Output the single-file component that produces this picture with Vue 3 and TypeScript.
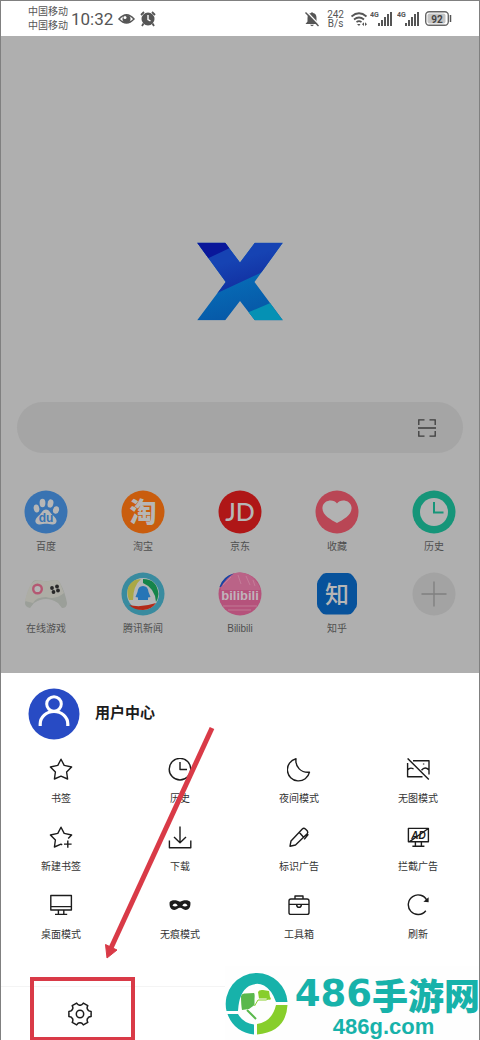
<script setup lang="ts">
interface Shortcut {
  id: string
  label: string
}

interface MenuEntry {
  label: string
  d: string
  solid?: string
  text?: string
}

const shortcuts: Shortcut[] = [
  { id: 'baidu', label: '百度' },
  { id: 'taobao', label: '淘宝' },
  { id: 'jd', label: '京东' },
  { id: 'fav', label: '收藏' },
  { id: 'history', label: '历史' },
  { id: 'games', label: '在线游戏' },
  { id: 'news', label: '腾讯新闻' },
  { id: 'bili', label: 'Bilibili' },
  { id: 'zhihu', label: '知乎' },
  { id: 'add', label: '' },
]

const menu: MenuEntry[] = [
  { label: '书签', d: 'M12 1.2L15.2 7.4L22.6 9L17.6 14L18.6 21L12 18.2L5.4 21L6.4 14L1.4 9L8.8 7.4Z' },
  { label: '历史', d: 'M12 .4A10.8 10.8 0 1 1 12 22A10.8 10.8 0 1 1 12 .4ZM12 4V11.5H19' },
  { label: '夜间模式', d: 'M9 .8C8 9 14 15 22.5 14.2A11.2 11.2 0 1 1 9 .8Z' },
  {
    label: '无图模式',
    d: 'M7 2.7H23V16.5M1.6 5V18.8H16.5M1.6 .4L22.8 21.4M1.6 12.2Q4 8.8 7.6 11M15.5 12.2Q19 8 23 12M17.6 5.4V6.6',
  },
  {
    label: '新建书签',
    d: 'M13.2 18.8L12 18.2L5.4 21L6.4 14L1.4 9L8.8 7.4L12 1.2L15.2 7.4L22.6 9L19.2 12.4M18.8 14.4V21.8M15 18.1H22.6',
  },
  { label: '下载', d: 'M1.4 14.5V21.8H22.8V14.5M12 .4V16.6M6 11L12 16.8L18 11' },
  {
    label: '标识广告',
    d: 'M3 20.2L4 15L15.3 3Q16.8 1.6 18.4 3L20.2 4.8Q21.4 6.3 20.2 7.8L8.5 19ZM12.2 6.3L16.6 11.2M21.3 8.2L17.2 13.4',
  },
  { label: '拦截广告', d: 'M2.4 2.4H22.4V15.8H2.4ZM9.4 16V20M15.4 16V20M6.4 20.2H18.4M3.6 15.6L22 2.8', text: 'AD' },
  { label: '桌面模式', d: 'M1.8 1.5H22.4V16H1.8ZM1.8 12.6H22.4M9.4 16V20.2M14.8 16V20.2M6 20.4H18.2' },
  {
    label: '无痕模式',
    d: '',
    solid:
      'M1.6 8.2C3.5 5.4 9 5.8 12 7.8C15 5.8 20.5 5.4 22.4 8.2C22.8 12 21.6 16 17.6 16C15 16 14 13.8 12 13.8C10 13.8 9 16 6.4 16C2.4 16 1.2 12 1.6 8.2ZM4.4 11.4Q7 7.6 9.8 11.4Q7 13.6 4.4 11.4ZM14.2 11.4Q17 7.6 19.6 11.4Q17 13.6 14.2 11.4Z',
  },
  {
    label: '工具箱',
    d: 'M4 5H20Q22 5 22 7V18.4Q22 20.4 20 20.4H4Q2 20.4 2 18.4V7Q2 5 4 5ZM8 5V2H16V5M2 10.4H22M9.6 10.6Q9.8 13.4 12 13.4Q14.2 13.4 14.4 10.6',
  },
  { label: '刷新', d: 'M21 6.6A9.8 9.8 0 1 0 19.8 16.8', solid: 'M22.6 3.2V8.2L17.4 7.8Z' },
]

function polar(deg: number, r: number): string {
  const a = (deg * Math.PI) / 180
  return `${(12 + r * Math.cos(a)).toFixed(2)} ${(12 + r * Math.sin(a)).toFixed(2)}`
}

const gearPath =
  [0, 60, 120, 180, 240, 300]
    .map((a, i) => `${i ? 'L' : 'M'}${polar(a - 13, 11.4)}L${polar(a + 13, 11.4)}Q${polar(a + 20, 8.4)} ${polar(a + 30, 9)}Q${polar(a + 40, 8.4)} ${polar(a + 47, 11.4)}`)
    .join('') + 'Z'

const bars = [3, 6, 9, 12, 15]
</script>

<template>
  <div class="phone">
    <header class="status">
      <div class="carriers"><span>中国移动</span><span>中国移动</span></div>
      <span class="time">10:32</span>
      <svg class="eye" viewBox="0 0 17 14" width="17" height="14">
        <path d="M1 7Q8.500-1.500 16 7Q8.500 15 1 7Z" fill="none" stroke="#555" stroke-width="1.500" />
        <circle cx="8.500" cy="7" r="4" fill="#555" /><circle cx="7" cy="5.500" r="1.500" fill="#fff" />
      </svg>
      <svg class="alarm" viewBox="0 0 16 16" width="16" height="16">
        <circle cx="8" cy="8" r="6.500" fill="#555" />
        <path d="M1 4L4 1M15 4L12 1M3.500 12.500L2 15M12.500 12.500L14 15" stroke="#555" stroke-width="1.800" />
        <path d="M8 4V8.500L10.500 10" fill="none" stroke="#fff" stroke-width="1.400" />
      </svg>
      <span class="spacer"></span>
      <svg viewBox="0 0 16 16" width="16" height="16">
        <path d="M1.500 13L3.500 10.500V7Q3.500 2.500 7 2L8 1L9 2Q12.500 2.500 12.500 7V10.500L14.500 13ZM6 13.800H10Q8 16.500 6 13.800Z" fill="#555" />
        <path d="M2.500 .5L15.500 14" stroke="#fff" stroke-width="1.400" /><path d="M1.500 1.500L14.500 15" stroke="#555" stroke-width="1.400" />
      </svg>
      <div class="speed"><span>242</span><span>B/s</span></div>
      <svg class="wifi" viewBox="0 0 18 16" width="18" height="16">
        <path d="M1.500 5.500Q9-1 16.500 5.500M4 8.500Q9 4.500 14 8.500M6.500 11.200Q9 9.200 11.500 11.200" fill="none" stroke="#555" stroke-width="1.700" />
        <path d="M7 13L9 15L10.500 13ZM12 13.200L14 11.200V15ZM17 13.200L15 11.200V15Z" fill="#555" />
      </svg>
      <svg v-for="n in 2" :key="n" class="signal" viewBox="0 0 25 16" width="25" height="16">
        <text x="0" y="6" class="net">4G</text>
        <rect v-for="(h, i) in bars" :key="h" :x="8 + i * 3" :y="15 - h + (i === 4 ? 1 : 0)" width="2" :height="i === 4 ? h - 1 : h" fill="#555" />
      </svg>
      <svg class="battery" viewBox="0 0 27 15" width="27" height="15">
        <rect x=".7" y=".7" width="22.600" height="13.600" rx="3.500" fill="none" stroke="#666" stroke-width="1.400" />
        <rect x="2.500" y="2.500" width="18" height="10" rx="2" fill="#c5c5c5" />
        <path d="M25.500 4V11" stroke="#555" stroke-width="1.500" />
        <text x="12" y="11.500" class="pct">92</text>
      </svg>
    </header>

    <main class="home">
      <svg class="logo" viewBox="0 0 86 78" width="86" height="79" role="img" aria-label="X">
        <defs>
          <clipPath id="xshape"><path d="M0 0H28L43 20L58 0H86L57.500 39.500L86 78H58L43 58.500L28 78H0L28.700 39.500Z" /></clipPath>
          <linearGradient id="xa" x1="0" y1="0" x2=".4" y2="1"><stop offset=".4" stop-color="#1643b3" /><stop offset="1" stop-color="#10299b" /></linearGradient>
          <linearGradient id="xb" x1="0" y1="0" x2=".3" y2="1"><stop offset=".5" stop-color="#066db7" /><stop offset="1" stop-color="#0759a8" /></linearGradient>
        </defs>
        <g clip-path="url(#xshape)">
          <rect width="86" height="78" fill="url(#xb)" />
          <path d="M0 0H86V20L0 60Z" fill="url(#xa)" />
          <path d="M0 0H36V4L0 21Z" fill="#0a179a" />
          <path d="M44 73L86 55V78H44Z" fill="#0591b4" />
        </g>
      </svg>

      <div class="search">
        <input type="text" aria-label="搜索" />
        <button type="button" aria-label="扫一扫">
          <svg viewBox="0 0 18 18" width="18" height="18">
            <path d="M6.500 .8H.8V6M11.500 .8H17.200V6M6.500 17.200H.8V12M11.500 17.200H17.200V12M0 9H18" fill="none" stroke="#3c3c3c" stroke-width="1.300" />
          </svg>
        </button>
      </div>

      <nav class="shortcuts">
        <a v-for="s in shortcuts" :key="s.id" href="#" class="shortcut" :aria-label="s.label || '添加'">
          <svg viewBox="0 0 44 44" width="44" height="44">
            <template v-if="s.id === 'baidu'">
              <circle cx="22" cy="22" r="21.500" fill="#3973b2" />
              <g fill="#b6b6b6">
                <ellipse cx="12.500" cy="18.500" rx="2.800" ry="4" transform="rotate(-12 12.500 18.500)" />
                <ellipse cx="18.500" cy="13" rx="2.900" ry="4.200" />
                <ellipse cx="26.500" cy="13.500" rx="2.900" ry="4.200" transform="rotate(12 26.500 13.500)" />
                <ellipse cx="32" cy="20" rx="3" ry="3.800" transform="rotate(15 32 20)" />
                <path d="M22 19.500C25 19.500 26 22.500 28.500 25C32 28 34 31 31.500 33.500C29 35.500 25 33.800 22 33.800C19 33.800 15 35.500 12.500 33.500C10 31 12 28 15.500 25C18 22.500 19 19.500 22 19.500Z" />
              </g>
              <text x="22" y="32" class="du">du</text>
            </template>
            <template v-else-if="s.id === 'taobao'">
              <circle cx="22" cy="22" r="21.500" fill="#c95d0e" /><text x="22" y="32" class="tao">淘</text>
            </template>
            <template v-else-if="s.id === 'jd'">
              <circle cx="22" cy="22" r="21.500" fill="#af1717" /><text x="22" y="31" class="jd">JD</text>
            </template>
            <template v-else-if="s.id === 'fav'">
              <circle cx="22" cy="22" r="21.500" fill="#b94655" />
              <path d="M22 13.500C25 9 35 9.500 36.500 17C37.500 25 28 29.500 22 33C16 29.500 6.500 25 7.500 17C9 9.500 19 9 22 13.500Z" fill="#b2b2b2" />
            </template>
            <template v-else-if="s.id === 'history'">
              <circle cx="22" cy="22" r="21.500" fill="#169579" /><circle cx="22" cy="22" r="14" fill="#b2b2b2" />
              <path d="M22 12V22.500H31.500" fill="none" stroke="#169579" stroke-width="2" />
            </template>
            <template v-else-if="s.id === 'games'">
              <path d="M8 11Q10 7 16 8.500Q22 10 28 8.500Q34 7 36 11Q41 20 43 31Q43 36 38 36L34 31Q22 23 10 31L6 36Q1 35 1 31Q3 20 8 11Z" fill="#9b9f99" />
              <path d="M7 12Q11 7 17 8.500Q22 10 28 8.500Q34 7 36 11L40 21Q32 28 22 25Q12 25 9 31L1 29Q3 19 7 12Z" fill="#adada5" />
              <circle cx="13.500" cy="17" r="4.300" fill="#b5b5b5" stroke="#b45872" stroke-width="2.400" />
              <g fill="#282828"><circle cx="28" cy="16" r="1.900" /><circle cx="33" cy="14.500" r="1.900" /><circle cx="29.500" cy="20" r="1.900" /><circle cx="34" cy="18.500" r="1.900" /></g>
            </template>
            <template v-else-if="s.id === 'news'">
              <circle cx="22" cy="22" r="21.500" fill="#398b9f" /><circle cx="22" cy="22" r="16" fill="#b4b6b7" />
              <path d="M8 28Q3 14 14 8L20 7Q12 14 12 28Z" fill="#aaa846" />
              <path d="M22 7Q36 7 37.500 22Q37 27 35 30Q34 16 22 11Z" fill="#15844a" />
              <path d="M8 33Q20 36 35 31Q30 38 22 38Q13 38 8 33Z" fill="#b22a18" />
              <path d="M22 14Q27 14 27.500 20L29.500 25L27 25.500L27 28H17L17 25.500L14.500 25L16.500 20Q17 14 22 14Z" fill="#2675b6" />
            </template>
            <template v-else-if="s.id === 'bili'">
              <circle cx="22" cy="22" r="21.500" fill="#b5527b" />
              <path d="M3 12Q10 0 22 .5Q36 1 43 18H3Z" fill="#ba6387" />
              <path d="M5 13L13 5M28 4L32 13M35 8L37 14M20 3L23 12M5 34H39M10 38H33" stroke="#c5839d" stroke-width=".8" />
              <path d="M1.500 15Q5 4 16 1.500Q8 6 3 15Z" fill="#1645a5" />
              <text x="22" y="28" class="bili">bilibili</text>
            </template>
            <template v-else-if="s.id === 'zhihu'">
              <path d="M11 1H33Q36 1 38 4L40 7Q42 9 42 12V32Q42 35 40 37L38 40Q36 42.500 33 42.500H11Q8 42.500 6 40L4 37Q2 35 2 32V12Q2 9 4 7L6 4Q8 1 11 1Z" fill="#07529b" />
              <text x="22" y="30.500" class="zhi">知</text>
            </template>
            <template v-else>
              <circle cx="22" cy="22" r="21.500" fill="#a3a3a3" /><path d="M22 9.500V34.500M9.500 22H34.500" stroke="#808080" stroke-width="1.400" />
            </template>
          </svg>
          <span>{{ s.label }}</span>
        </a>
      </nav>
    </main>

    <section class="sheet">
      <a href="#" class="user">
        <svg viewBox="0 0 52 52" width="52" height="52">
          <circle cx="26" cy="26" r="25.500" fill="#284bc4" />
          <circle cx="26" cy="16" r="7.300" fill="none" stroke="#fff" stroke-width="3" />
          <path d="M12.200 38V36A13.800 12.500 0 0 1 39.800 36V38" fill="none" stroke="#fff" stroke-width="3.200" />
        </svg>
        <span>用户中心</span>
      </a>

      <div class="menu">
        <button v-for="m in menu" :key="m.label" type="button">
          <svg viewBox="0 0 24 24" width="24" height="24">
            <path v-if="m.d" :d="m.d" fill="none" stroke="#1c1c1c" stroke-width="1.400" stroke-linejoin="round" />
            <path v-if="m.solid" :d="m.solid" fill="#1c1c1c" fill-rule="evenodd" />
            <text v-if="m.text" x="12.500" y="12.800" class="ad">{{ m.text }}</text>
          </svg>
          <span>{{ m.label }}</span>
        </button>
      </div>

      <footer class="bar">
        <button type="button" aria-label="设置">
          <svg viewBox="0 0 24 24" width="24" height="24" fill="none" stroke="#1c1c1c" stroke-width="1.500" stroke-linejoin="round">
            <path :d="gearPath" /><circle cx="12" cy="12" r="3.700" />
          </svg>
        </button>
        <span class="highlight"></span>
      </footer>

      <svg class="arrow" viewBox="0 0 120 240" width="120" height="240">
        <path d="M112 5L11 225" stroke="#d93a47" stroke-width="5" />
        <path d="M7 235L5.500 221.500L17 227Z" fill="#d93a47" stroke="#d93a47" stroke-width="1" />
      </svg>
    </section>

    <aside class="mark">
      <svg viewBox="0 0 64 64" width="64" height="64">
        <path d="M32 1A31 31 0 0 1 62.500 30H51Q47 18 39 13.500Q32 10 24 14Q14 20 13 39H1.500A31 31 0 0 1 32 1Z" fill="#17b2aa" />
        <path d="M2.500 42H13Q18 51 29 52.500V62.500Q9 60 2.500 42Z" fill="#17b2aa" />
        <path d="M32 62.500V52Q47 50 51 33H62.500Q61 60 32 62.500Z" fill="#87ce2b" />
        <path d="M16 24Q17 21 20 21.500L29 21Q30 22 29.500 27V33L24 37L17 38Q16 33 16 24Z" fill="#59b84c" />
        <path d="M33 20Q34 17.500 38 18L44 19L45.500 28L41 26.500H34Z" fill="#87ce2b" />
        <path d="M22 38L31 47" stroke="#59b84c" stroke-width="2" />
        <path d="M29.500 34L33 28H41L46 26" fill="none" stroke="#87ce2b" stroke-width="1" />
      </svg>
      <div class="words">
        <p class="brand"><b>486</b><strong>手游网</strong></p>
        <p class="domain">486g.com</p>
      </div>
    </aside>
  </div>
</template>

<style>
body {
  margin: 0;
  background: #fff;
}
</style>

<style scoped>
.phone {
  position: relative;
  box-sizing: border-box;
  min-height: 100vh;
  display: flex;
  flex-direction: column;
  border: 1px solid #808080;
  overflow: hidden;
  font-family: "Liberation Sans", "Noto Sans CJK SC", sans-serif;
  color: #333;
}
a {
  color: inherit;
  text-decoration: none;
}
button {
  padding: 0;
  border: 0;
  background: none;
  color: inherit;
  font: inherit;
}
svg {
  display: block;
  flex: none;
}
.status {
  height: 35px;
  padding: 0 27px;
  display: flex;
  align-items: center;
  color: #555;
  background: #fff;
}
.carriers,
.speed {
  display: flex;
  flex-direction: column;
  font-size: 10px;
  line-height: 14px;
}
.time {
  margin-left: 3px;
  font-family: Roboto, sans-serif;
  font-size: 17px;
  line-height: 20px;
}
.eye {
  margin-left: 5px;
}
.alarm {
  margin-left: 5px;
}
.spacer {
  flex: 1;
}
.speed {
  margin-left: 7px;
  font-family: Roboto, sans-serif;
  line-height: 9px;
  text-align: center;
}
.wifi {
  margin-left: 6px;
}
.signal {
  margin-left: 2px;
}
.net {
  font: bold 7px Roboto, sans-serif;
  fill: #555;
}
.battery {
  margin-left: 3px;
}
.pct {
  font: bold 10px Roboto, sans-serif;
  fill: #444;
  text-anchor: middle;
}
.home {
  flex: 1;
  padding: 206px 16px 37px;
  background: #afafaf;
}
.logo {
  margin: 0 auto 81px;
}
.search {
  display: flex;
  align-items: center;
  height: 51px;
  border-radius: 26px;
  background: #a5a5a5;
}
.search input {
  flex: 1;
  min-width: 0;
  height: 100%;
  padding: 0 20px;
  border: 0;
  background: none;
  font-size: 16px;
  outline: none;
}
.search button {
  margin-right: 27px;
}
.shortcuts {
  display: grid;
  grid-template-columns: repeat(5, 44px);
  justify-content: space-between;
  row-gap: 18px;
  padding: 37px 7px 0;
}
.shortcut {
  display: flex;
  flex-direction: column;
  align-items: center;
  gap: 6px;
  font-size: 10px;
  line-height: 14px;
  white-space: nowrap;
  color: #505050;
}
.shortcut span {
  min-height: 14px;
}
.du {
  font: bold 12px "Liberation Sans", sans-serif;
  fill: #3973b2;
  text-anchor: middle;
}
.tao {
  font: 900 27px "Noto Sans CJK SC", sans-serif;
  fill: #b6b6b6;
  text-anchor: middle;
}
.jd {
  font: 500 25px Lato, sans-serif;
  fill: #b6b6b6;
  text-anchor: middle;
}
.bili {
  font: bold 13px "Liberation Sans", sans-serif;
  fill: #c0b4bb;
  text-anchor: middle;
}
.zhi {
  font: 500 24px "Noto Sans CJK SC", sans-serif;
  fill: #b6b6b6;
  text-anchor: middle;
}
.sheet {
  position: relative;
  padding-top: 15px;
  background: #fff;
}
.user {
  display: flex;
  align-items: center;
  gap: 15px;
  padding-left: 27px;
  font-size: 15px;
  font-weight: bold;
  line-height: 24px;
  color: #1c1c1c;
}
.user span {
  padding-bottom: 4px;
  font-family: "Noto Sans CJK SC", sans-serif;
}
.menu {
  display: grid;
  grid-template-columns: repeat(4, 60px);
  justify-content: space-between;
  row-gap: 20px;
  padding: 18px 31px 44px 30px;
}
.menu button {
  display: flex;
  flex-direction: column;
  align-items: center;
  gap: 10px;
  font-size: 10px;
  line-height: 14px;
}
.ad {
  font: italic bold 10px "Liberation Sans", sans-serif;
  fill: #1c1c1c;
  text-anchor: middle;
}
.bar {
  position: relative;
  display: flex;
  align-items: center;
  height: 53px;
  padding-left: 67px;
  border-top: 1px solid #f4f4f4;
}
.highlight {
  position: absolute;
  left: 29px;
  top: -10px;
  bottom: -1px;
  width: 105px;
  box-sizing: border-box;
  border: 4px solid #d93a47;
  pointer-events: none;
}
.arrow {
  position: absolute;
  left: 99px;
  top: 50px;
  pointer-events: none;
}
.mark {
  position: absolute;
  right: -1px;
  bottom: -1px;
  display: flex;
  gap: 6px;
  padding: 6px 0 3px;
  background: #fefefe;
  color: #17b2aa;
}
.words {
  display: flex;
  flex-direction: column;
  align-items: flex-start;
}
.words p {
  margin: 0;
  white-space: nowrap;
}
.brand {
  display: flex;
  align-items: center;
  line-height: 44px;
}
.brand b {
  font-family: "DejaVu Sans", sans-serif;
  font-size: 37px;
}
.brand strong {
  font-family: "Noto Sans CJK SC", sans-serif;
  font-size: 36px;
  font-weight: 900;
}
.words .domain {
  margin-left: 38px;
  font-size: 22px;
  font-weight: bold;
  line-height: 22px;
}
</style>
